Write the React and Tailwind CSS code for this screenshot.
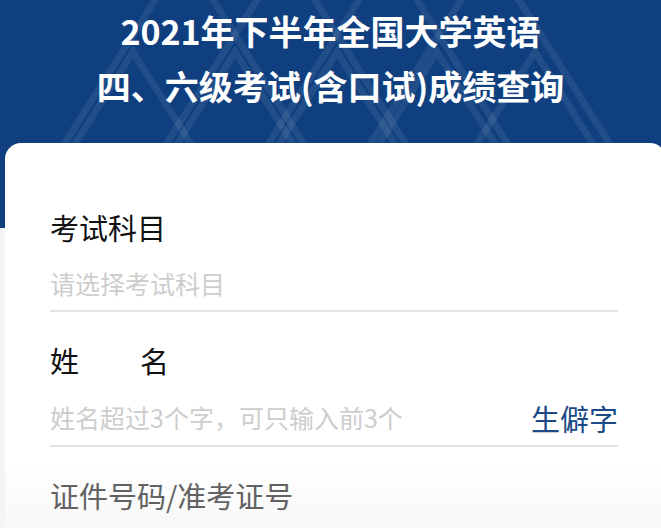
import React from "react";

const peaks = [
  [133, 52],
  [235, 52],
  [337, 52],
  [437, 52],
  [535, 52],
  [184, -46],
  [286, -46],
  [388, -46],
  [490, -46],
];

function HeaderPattern() {
  return (
    <svg
      className="absolute inset-0 h-full w-full"
      viewBox="0 0 661 228"
      preserveAspectRatio="none"
    >
      {peaks.map(([x, y]) => {
        const dx = (228 - y) * 0.63;
        return (
          <polyline
            key={`${x}-${y}`}
            points={`${x - dx},228 ${x},${y} ${x + dx},228`}
            fill="none"
            stroke="#ffffff"
            strokeOpacity="0.08"
            strokeWidth="7"
          />
        );
      })}
    </svg>
  );
}

export default function App() {
  return (
    <div
      className="h-[528px] w-[661px] overflow-hidden bg-[#f4f4f4]"
      style={{ fontFamily: '"Noto Sans CJK SC", "Noto Sans", sans-serif' }}
    >
      <div className="relative h-[228px] bg-[#0f3f7f]">
        <HeaderPattern />
        <h1 className="relative pt-[3px] text-center text-[34px] font-bold leading-[55px] text-white">
          <div>2021年下半年全国大学英语</div>
          <div>四、六级考试(含口试)成绩查询</div>
        </h1>
      </div>

      <div className="relative -mt-[85px] ml-[5px] h-[400px] w-[661px] rounded-t-[16px] bg-gradient-to-b from-white from-80% to-[#f6f6f6] pl-[45px] pr-[48px] pt-[64px]">
        {/* exam subject */}
        <div className="h-[40px] text-[29px] leading-[40px] text-[#111]">考试科目</div>
        <div className="mt-[17px] box-content flex h-[40px] items-center border-b-2 border-[#e3e3e3] pb-[6px]">
          <span className="text-[25px] text-[#cdcdcd]">请选择考试科目</span>
        </div>

        {/* name */}
        <div className="mt-[28px] flex h-[40px] w-[119px] justify-between text-[29px] leading-[40px] text-[#111]">
          <span>姓</span>
          <span>名</span>
        </div>
        <div className="mt-[18px] box-content flex h-[40px] items-center justify-between border-b-2 border-[#e3e3e3] pb-[7px]">
          <span className="text-[25px] text-[#cdcdcd]">姓名超过3个字，可只输入前3个</span>
          <button className="text-[29px] leading-[40px] text-[#1b4a86]">生僻字</button>
        </div>

        {/* id number */}
        <div className="mt-[28px] h-[40px] text-[29px] leading-[40px] text-[#626262]">
          证件号码/准考证号
        </div>
      </div>
    </div>
  );
}
